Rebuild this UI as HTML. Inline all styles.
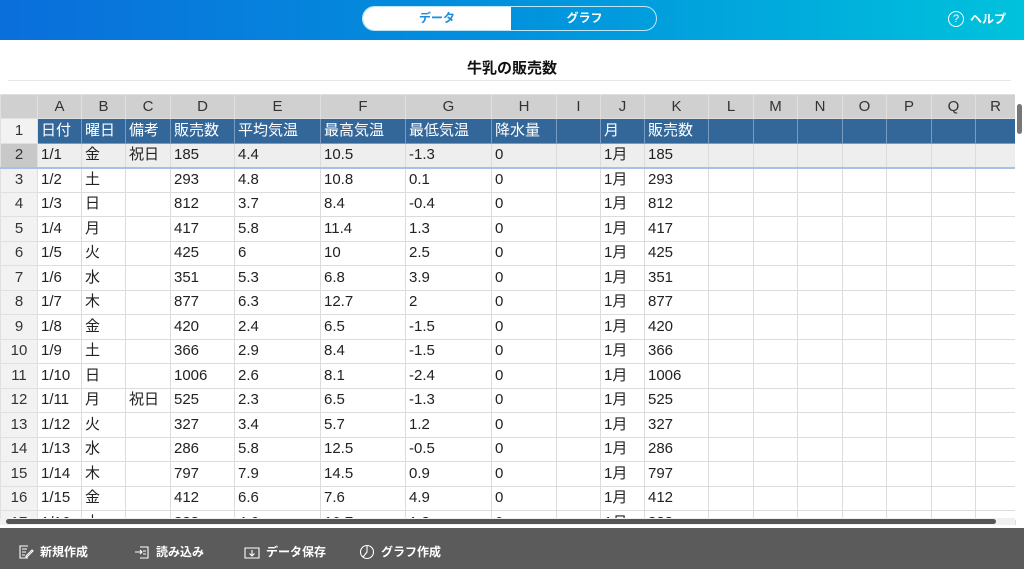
<!DOCTYPE html><html><head><meta charset="utf-8"><style>
*{margin:0;padding:0;box-sizing:border-box}
body{width:1024px;height:569px;overflow:hidden;background:#fff;font-family:"Liberation Sans","Noto Sans CJK JP",sans-serif;position:relative}
.hd{position:absolute;left:0;top:0;width:1024px;height:40px;background:linear-gradient(90deg,#0a6edb,#0196dd 55%,#00c2dc)}
.pill{position:absolute;left:362px;top:6px;width:295px;height:25px;border:1.5px solid #bfe6f7;border-radius:13px;overflow:hidden}
.pill .l{position:absolute;left:0;top:0;width:148px;height:100%;background:#fff;color:#1a8de0;font-size:12px;font-weight:bold;text-align:center;line-height:22px}
.pill .r{position:absolute;left:148px;top:0;width:147px;height:100%;color:#fff;font-size:12px;font-weight:bold;text-align:center;line-height:22px}
.help{position:absolute;left:948px;top:10px;color:#fff;font-size:12px;font-weight:bold;display:flex;align-items:center;gap:6px}
.help i{display:inline-block;width:16px;height:16px;border:1.2px solid #fff;border-radius:50%;font-style:normal;font-weight:normal;font-size:11px;text-align:center;line-height:14px}
.title{position:absolute;left:0;top:57px;width:1024px;text-align:center;font-size:15px;font-weight:bold;color:#111}
.tl{position:absolute;left:8px;top:80px;width:1003px;height:1px;background:#e6e6e6}
table{position:absolute;left:0;top:94px;border-collapse:collapse;table-layout:fixed;font-size:15px;color:#222}
td{height:24.5px;border:1px solid #dcdcdc;padding:0 3px;white-space:nowrap;overflow:hidden;line-height:22px}
tr.h td{background:#d0d0d0;text-align:center;color:#333;border-color:#e0e0e0;height:24px}
td.rh{text-align:center;background:#f2f2f2;color:#333;border-color:#e0e0e0;padding:0}
tr.b td{background:#336699;color:#fff;border-color:#7a9cc0}
tr.b td.rh{background:#f2f2f2;color:#333;border-color:#e0e0e0}
tr.s td{background:#eeeeee;border-bottom:2px solid #a9bfe6}
tr.s td.rh{background:#c8c8c8}
.vs{position:absolute;left:1015px;top:94px;width:9px;height:426px;background:#fff}
.vs b{position:absolute;left:2px;top:10px;width:5px;height:30px;background:#777;border-radius:3px}
.hs{position:absolute;left:0;top:518px;width:1015px;height:7px;background:#f0f0f0}
.hs b{position:absolute;left:6px;top:1px;width:990px;height:5px;background:#555;border-radius:3px}
.ft{position:absolute;left:0;top:528px;width:1024px;height:41px;background:#5b5b5b;color:#fff;font-size:12px;font-weight:bold}
.ft span{position:absolute;top:15px;display:flex;align-items:center;gap:6px}
</style></head><body>
<div class="hd"><div class="pill"><div class="l">データ</div><div class="r">グラフ</div></div>
<div class="help"><i>?</i>ヘルプ</div></div>
<div class="title">牛乳の販売数</div><div class="tl"></div>
<table>
<colgroup><col style="width:37px"><col style="width:44px"><col style="width:44px"><col style="width:45px"><col style="width:64px"><col style="width:86px"><col style="width:85px"><col style="width:86px"><col style="width:65px"><col style="width:44px"><col style="width:44px"><col style="width:64px"><col style="width:45px"><col style="width:44px"><col style="width:45px"><col style="width:44px"><col style="width:45px"><col style="width:44px"><col style="width:40px"></colgroup>
<tr class="h"><td></td><td>A</td><td>B</td><td>C</td><td>D</td><td>E</td><td>F</td><td>G</td><td>H</td><td>I</td><td>J</td><td>K</td><td>L</td><td>M</td><td>N</td><td>O</td><td>P</td><td>Q</td><td>R</td></tr>
<tr class="b"><td class="rh">1</td><td>日付</td><td>曜日</td><td>備考</td><td>販売数</td><td>平均気温</td><td>最高気温</td><td>最低気温</td><td>降水量</td><td></td><td>月</td><td>販売数</td><td></td><td></td><td></td><td></td><td></td><td></td><td></td></tr>
<tr class="s"><td class="rh">2</td><td>1/1</td><td>金</td><td>祝日</td><td>185</td><td>4.4</td><td>10.5</td><td>-1.3</td><td>0</td><td></td><td>1月</td><td>185</td><td></td><td></td><td></td><td></td><td></td><td></td><td></td></tr>
<tr><td class="rh">3</td><td>1/2</td><td>土</td><td></td><td>293</td><td>4.8</td><td>10.8</td><td>0.1</td><td>0</td><td></td><td>1月</td><td>293</td><td></td><td></td><td></td><td></td><td></td><td></td><td></td></tr>
<tr><td class="rh">4</td><td>1/3</td><td>日</td><td></td><td>812</td><td>3.7</td><td>8.4</td><td>-0.4</td><td>0</td><td></td><td>1月</td><td>812</td><td></td><td></td><td></td><td></td><td></td><td></td><td></td></tr>
<tr><td class="rh">5</td><td>1/4</td><td>月</td><td></td><td>417</td><td>5.8</td><td>11.4</td><td>1.3</td><td>0</td><td></td><td>1月</td><td>417</td><td></td><td></td><td></td><td></td><td></td><td></td><td></td></tr>
<tr><td class="rh">6</td><td>1/5</td><td>火</td><td></td><td>425</td><td>6</td><td>10</td><td>2.5</td><td>0</td><td></td><td>1月</td><td>425</td><td></td><td></td><td></td><td></td><td></td><td></td><td></td></tr>
<tr><td class="rh">7</td><td>1/6</td><td>水</td><td></td><td>351</td><td>5.3</td><td>6.8</td><td>3.9</td><td>0</td><td></td><td>1月</td><td>351</td><td></td><td></td><td></td><td></td><td></td><td></td><td></td></tr>
<tr><td class="rh">8</td><td>1/7</td><td>木</td><td></td><td>877</td><td>6.3</td><td>12.7</td><td>2</td><td>0</td><td></td><td>1月</td><td>877</td><td></td><td></td><td></td><td></td><td></td><td></td><td></td></tr>
<tr><td class="rh">9</td><td>1/8</td><td>金</td><td></td><td>420</td><td>2.4</td><td>6.5</td><td>-1.5</td><td>0</td><td></td><td>1月</td><td>420</td><td></td><td></td><td></td><td></td><td></td><td></td><td></td></tr>
<tr><td class="rh">10</td><td>1/9</td><td>土</td><td></td><td>366</td><td>2.9</td><td>8.4</td><td>-1.5</td><td>0</td><td></td><td>1月</td><td>366</td><td></td><td></td><td></td><td></td><td></td><td></td><td></td></tr>
<tr><td class="rh">11</td><td>1/10</td><td>日</td><td></td><td>1006</td><td>2.6</td><td>8.1</td><td>-2.4</td><td>0</td><td></td><td>1月</td><td>1006</td><td></td><td></td><td></td><td></td><td></td><td></td><td></td></tr>
<tr><td class="rh">12</td><td>1/11</td><td>月</td><td>祝日</td><td>525</td><td>2.3</td><td>6.5</td><td>-1.3</td><td>0</td><td></td><td>1月</td><td>525</td><td></td><td></td><td></td><td></td><td></td><td></td><td></td></tr>
<tr><td class="rh">13</td><td>1/12</td><td>火</td><td></td><td>327</td><td>3.4</td><td>5.7</td><td>1.2</td><td>0</td><td></td><td>1月</td><td>327</td><td></td><td></td><td></td><td></td><td></td><td></td><td></td></tr>
<tr><td class="rh">14</td><td>1/13</td><td>水</td><td></td><td>286</td><td>5.8</td><td>12.5</td><td>-0.5</td><td>0</td><td></td><td>1月</td><td>286</td><td></td><td></td><td></td><td></td><td></td><td></td><td></td></tr>
<tr><td class="rh">15</td><td>1/14</td><td>木</td><td></td><td>797</td><td>7.9</td><td>14.5</td><td>0.9</td><td>0</td><td></td><td>1月</td><td>797</td><td></td><td></td><td></td><td></td><td></td><td></td><td></td></tr>
<tr><td class="rh">16</td><td>1/15</td><td>金</td><td></td><td>412</td><td>6.6</td><td>7.6</td><td>4.9</td><td>0</td><td></td><td>1月</td><td>412</td><td></td><td></td><td></td><td></td><td></td><td></td><td></td></tr>
<tr><td class="rh">17</td><td>1/16</td><td>土</td><td></td><td>333</td><td>4.6</td><td>10.7</td><td>1.3</td><td>0</td><td></td><td>1月</td><td>333</td><td></td><td></td><td></td><td></td><td></td><td></td><td></td></tr>
</table>
<div class="vs"><b></b></div>
<div class="hs"><b></b></div>
<div style="position:absolute;left:0;top:525px;width:1024px;height:3px;background:#fff"></div>
<div class="ft">
<span style="left:18px"><svg width="16" height="16" viewBox="0 0 16 16" fill="none" stroke="#fff" stroke-width="1.1"><path d="M10 2H2v12h8M4 5h5M4 8h4M4 11h3M8 12l6-6 1 1-6 6H8z"/></svg>新規作成</span>
<span style="left:134px"><svg width="16" height="16" viewBox="0 0 16 16" fill="none" stroke="#fff" stroke-width="1.1"><path d="M6 3h8v11H6M1 8h7M6 6l2 2-2 2M9 7h3M9 10h3"/></svg>読み込み</span>
<span style="left:244px"><svg width="16" height="16" viewBox="0 0 16 16" fill="none" stroke="#fff" stroke-width="1.1"><path d="M1 4h14v10H1zM8 6v6M5.5 9.5L8 12l2.5-2.5"/></svg>データ保存</span>
<span style="left:359px"><svg width="16" height="16" viewBox="0 0 16 16" fill="none" stroke="#fff" stroke-width="1.1"><circle cx="8" cy="8" r="6.5"/><path d="M8 1.5V8l-4 5"/></svg>グラフ作成</span>
</div>
</body></html>
